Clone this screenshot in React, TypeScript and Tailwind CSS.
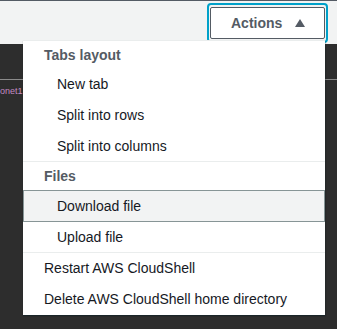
export default function App() {
	const font = { fontFamily: '"Liberation Sans", Arial, sans-serif' };

	return (
		<div className="relative h-[329px] w-[337px] overflow-hidden bg-[#2d2d2d]" style={font}>
			<div className="flex h-[44px] justify-end border-t border-[#545b64] bg-[#f2f3f3] pt-[2px] pr-[9px]">
				<div className="h-[40px] rounded-[4px] border-2 border-[#00a1c9] px-px py-[2px]">
					<button className="flex h-[32px] w-[115px] items-center gap-[13px] rounded-[2px] border border-[#545b64] bg-white pl-[20px] text-[14px] font-bold text-[#545b64]">
						Actions
						<svg width="10" height="8" viewBox="0 0 10 8" className="mt-[-1px]">
							<path d="M5 0 L10 8 L0 8 Z" fill="#545b64" />
						</svg>
					</button>
				</div>
			</div>

			<div className="mt-[35px] h-px bg-[#8a8a8a]" />
			<div className="mt-[6px] w-[23px] text-[9px] leading-[10px] text-[#c38ac0]">onet1.</div>

			<div className="absolute top-[40px] left-[23px] w-[302px] border-t border-[#eaeded] bg-white text-[14px] text-[#16191f] shadow-[0_1px_1px_rgba(0,28,36,0.3),1px_1px_1px_rgba(0,28,36,0.15)]">
				<div className="flex h-[28px] items-center pl-[21px] font-bold text-[#545b64]">Tabs layout</div>
				<div className="flex h-[31px] items-center pl-[34px]">New tab</div>
				<div className="flex h-[31px] items-center pl-[34px]">Split into rows</div>
				<div className="flex h-[30px] items-center pl-[34px]">Split into columns</div>
				<div className="h-px bg-[#eaeded]" />
				<div className="flex h-[28px] items-center pl-[21px] font-bold text-[#545b64]">Files</div>
				<div className="flex h-[32px] items-center border border-[#879596] bg-[#f2f3f3] pl-[33px]">Download file</div>
				<div className="flex h-[30px] items-center pl-[34px]">Upload file</div>
				<div className="h-px bg-[#eaeded]" />
				<div className="flex h-[31px] items-center pl-[21px]">Restart AWS CloudShell</div>
				<div className="flex h-[31px] items-center pl-[21px]">Delete AWS CloudShell home directory</div>
			</div>
		</div>
	);
}
